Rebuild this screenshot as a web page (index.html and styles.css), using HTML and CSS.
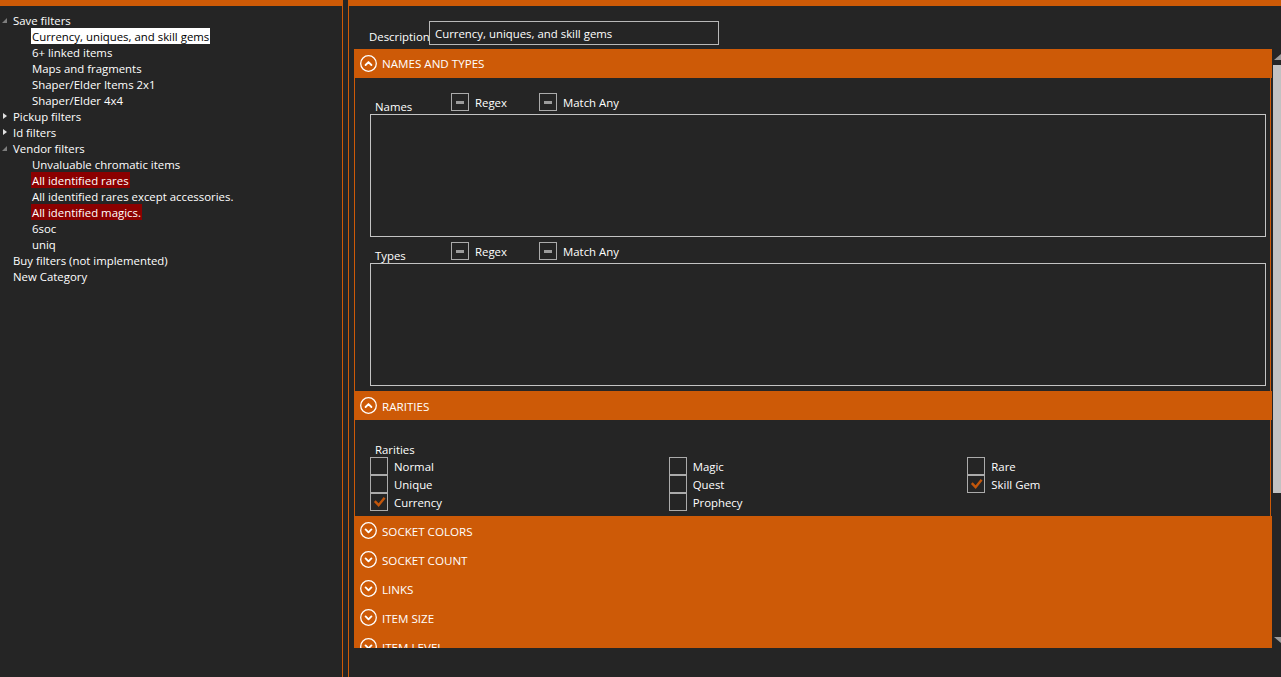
FILE: index.html
```html
<!DOCTYPE html>
<html>
<head>
<meta charset="utf-8">
<link rel="stylesheet" href="styles.css">
</head>
<body>
<div class="app">
  <aside class="tree">
    <div class="node"><span class="exp"><i class="tri-open"></i></span><span class="lbl">Save filters</span></div>
    <div class="node child"><span class="lbl sel">Currency, uniques, and skill gems</span></div>
    <div class="node child"><span class="lbl">6+ linked items</span></div>
    <div class="node child"><span class="lbl">Maps and fragments</span></div>
    <div class="node child"><span class="lbl">Shaper/Elder Items 2x1</span></div>
    <div class="node child"><span class="lbl">Shaper/Elder 4x4</span></div>
    <div class="node"><span class="exp"><i class="tri-closed"></i></span><span class="lbl">Pickup filters</span></div>
    <div class="node"><span class="exp"><i class="tri-closed"></i></span><span class="lbl">Id filters</span></div>
    <div class="node"><span class="exp"><i class="tri-open"></i></span><span class="lbl">Vendor filters</span></div>
    <div class="node child"><span class="lbl">Unvaluable chromatic items</span></div>
    <div class="node child"><span class="lbl warn">All identified rares</span></div>
    <div class="node child"><span class="lbl">All identified rares except accessories.</span></div>
    <div class="node child"><span class="lbl warn">All identified magics.</span></div>
    <div class="node child"><span class="lbl">6soc</span></div>
    <div class="node child"><span class="lbl">uniq</span></div>
    <div class="node"><span class="exp"></span><span class="lbl">Buy filters (not implemented)</span></div>
    <div class="node"><span class="exp"></span><span class="lbl">New Category</span></div>
  </aside>
  <div class="gap"></div>
  <main class="editor">
    <div class="desc-row">
      <span class="desc-label">Description</span>
      <div class="textbox">Currency, uniques, and skill gems</div>
    </div>
    <div class="scroller">
      <div class="sections">
        <section class="sec">
          <div class="sec-head first">
            <svg class="chev" viewBox="0 0 17 17" width="17" height="17"><circle cx="8.5" cy="8.5" r="7.8" fill="none" stroke="#fff" stroke-width="1.3"/><polyline points="5.6,10 8.5,7.1 11.4,10" fill="none" stroke="#fff" stroke-width="1.9" stroke-linecap="round" stroke-linejoin="round"/></svg>
            <span class="sec-title">NAMES AND TYPES</span>
          </div>
          <div class="sec-body names">
            <div class="field-row">
              <span class="field-label">Names</span>
              <span class="cbg first"><span class="cb ind"><i></i></span><span class="cbt">Regex</span></span>
              <span class="cbg"><span class="cb ind"><i></i></span><span class="cbt">Match Any</span></span>
            </div>
            <div class="listbox"></div>
            <div class="field-row second">
              <span class="field-label">Types</span>
              <span class="cbg first"><span class="cb ind"><i></i></span><span class="cbt">Regex</span></span>
              <span class="cbg"><span class="cb ind"><i></i></span><span class="cbt">Match Any</span></span>
            </div>
            <div class="listbox"></div>
          </div>
        </section>
        <section class="sec">
          <div class="sec-head">
            <svg class="chev" viewBox="0 0 17 17" width="17" height="17"><circle cx="8.5" cy="8.5" r="7.8" fill="none" stroke="#fff" stroke-width="1.3"/><polyline points="5.6,10 8.5,7.1 11.4,10" fill="none" stroke="#fff" stroke-width="1.9" stroke-linecap="round" stroke-linejoin="round"/></svg>
            <span class="sec-title">RARITIES</span>
          </div>
          <div class="sec-body rarities">
            <div class="rar-label">Rarities</div>
            <div class="rar-grid">
              <span class="cbg"><span class="cb"></span><span class="cbt">Normal</span></span>
              <span class="cbg"><span class="cb"></span><span class="cbt">Magic</span></span>
              <span class="cbg"><span class="cb"></span><span class="cbt">Rare</span></span>
              <span class="cbg"><span class="cb"></span><span class="cbt">Unique</span></span>
              <span class="cbg"><span class="cb"></span><span class="cbt">Quest</span></span>
              <span class="cbg"><span class="cb"><svg viewBox="0 0 18 18" width="18" height="18"><polyline points="4.8,8.2 8.6,12.2 14.6,4.8" fill="none" stroke="#c2560b" stroke-width="2.4"/></svg></span><span class="cbt">Skill Gem</span></span>
              <span class="cbg"><span class="cb"><svg viewBox="0 0 18 18" width="18" height="18"><polyline points="4.8,8.2 8.6,12.2 14.6,4.8" fill="none" stroke="#c2560b" stroke-width="2.4"/></svg></span><span class="cbt">Currency</span></span>
              <span class="cbg"><span class="cb"></span><span class="cbt">Prophecy</span></span>
            </div>
          </div>
        </section>
        <section class="sec">
          <div class="sec-head">
            <svg class="chev" viewBox="0 0 17 17" width="17" height="17"><circle cx="8.5" cy="8.5" r="7.8" fill="none" stroke="#fff" stroke-width="1.3"/><polyline points="5.6,7.4 8.5,10.3 11.4,7.4" fill="none" stroke="#fff" stroke-width="1.9" stroke-linecap="round" stroke-linejoin="round"/></svg>
            <span class="sec-title">SOCKET COLORS</span>
          </div>
        </section>
        <section class="sec">
          <div class="sec-head">
            <svg class="chev" viewBox="0 0 17 17" width="17" height="17"><circle cx="8.5" cy="8.5" r="7.8" fill="none" stroke="#fff" stroke-width="1.3"/><polyline points="5.6,7.4 8.5,10.3 11.4,7.4" fill="none" stroke="#fff" stroke-width="1.9" stroke-linecap="round" stroke-linejoin="round"/></svg>
            <span class="sec-title">SOCKET COUNT</span>
          </div>
        </section>
        <section class="sec">
          <div class="sec-head">
            <svg class="chev" viewBox="0 0 17 17" width="17" height="17"><circle cx="8.5" cy="8.5" r="7.8" fill="none" stroke="#fff" stroke-width="1.3"/><polyline points="5.6,7.4 8.5,10.3 11.4,7.4" fill="none" stroke="#fff" stroke-width="1.9" stroke-linecap="round" stroke-linejoin="round"/></svg>
            <span class="sec-title">LINKS</span>
          </div>
        </section>
        <section class="sec">
          <div class="sec-head">
            <svg class="chev" viewBox="0 0 17 17" width="17" height="17"><circle cx="8.5" cy="8.5" r="7.8" fill="none" stroke="#fff" stroke-width="1.3"/><polyline points="5.6,7.4 8.5,10.3 11.4,7.4" fill="none" stroke="#fff" stroke-width="1.9" stroke-linecap="round" stroke-linejoin="round"/></svg>
            <span class="sec-title">ITEM SIZE</span>
          </div>
        </section>
        <section class="sec">
          <div class="sec-head">
            <svg class="chev" viewBox="0 0 17 17" width="17" height="17"><circle cx="8.5" cy="8.5" r="7.8" fill="none" stroke="#fff" stroke-width="1.3"/><polyline points="5.6,7.4 8.5,10.3 11.4,7.4" fill="none" stroke="#fff" stroke-width="1.9" stroke-linecap="round" stroke-linejoin="round"/></svg>
            <span class="sec-title">ITEM LEVEL</span>
          </div>
        </section>
      </div>
      <div class="vscroll">
        <div class="vscroll-inner">
          <div class="sb-btn"><i class="sb-up"></i></div>
          <div class="sb-thumb"></div>
          <div class="sb-track"></div>
          <div class="sb-btn"><i class="sb-down"></i></div>
        </div>
      </div>
    </div>
  </main>
</div>
</body>
</html>
```

FILE: styles.css
```css
* { box-sizing: border-box; }
html, body { margin: 0; padding: 0; }
body {
  background: #252525;
  color: #ffffff;
  font-family: "Open Sans", "Noto Sans", "Liberation Sans", sans-serif;
  font-size: 11.4px;
  overflow: hidden;
  width: 1281px;
  height: 677px;
}
.app { display: flex; height: 677px; }

/* tree */
.tree {
  width: 343px;
  flex: none;
  border-top: 6px solid #cd5a07;
  border-right: 1px solid #cd5a07;
  padding-top: 6px;
}
.gap { width: 5px; flex: none; }
.node { display: flex; align-items: flex-start; height: 16px; }
.node.child { padding-left: 31px; }
.exp { width: 12px; height: 16px; flex: none; display: flex; align-items: center; padding-left: 2px; }
.lbl { padding: 1px 1px 0; line-height: 15px; height: 16px; white-space: nowrap; }
.lbl.sel { background: #ffffff; color: #000000; }
.lbl.warn { background: #8b0000; }
.tri-open {
  display: block; width: 0; height: 0;
  border-left: 5px solid transparent;
  border-bottom: 5px solid #7d7d7d;
}
.tri-closed {
  display: block; width: 0; height: 0;
  border-left: 4px solid #e0e0e0;
  border-top: 3.5px solid transparent;
  border-bottom: 3.5px solid transparent;
  margin-left: 1px;
}

/* editor */
.editor {
  flex: 1;
  min-width: 0;
  border-left: 1px solid #cd5a07;
  border-top: 6px solid #cd5a07;
  display: flex;
  flex-direction: column;
}
.desc-row {
  display: flex;
  align-items: flex-end;
  margin-top: 15px;
  padding-left: 20px;
  height: 24px;
}
.desc-label { width: 60px; line-height: 16px; white-space: nowrap; }
.textbox {
  width: 290px;
  height: 24px;
  border: 1px solid #b9b9b9;
  padding: 1px 0 0 5px;
  line-height: 21px;
  background: #252525;
}
.scroller {
  display: flex;
  margin-top: 4px;
  margin-left: 5px;
  height: 599px;
}
.sections { flex: 1; min-width: 0; overflow: hidden; }
.sec-head {
  height: 29px;
  background: #cd5a07;
  display: flex;
  align-items: center;
  padding-left: 6px;
  gap: 5px;
  font-size: 11.6px;
  white-space: nowrap;
}
.sec-title { padding-top: 1px; }
.sec-head.first .sec-title { padding-top: 0; }
.chev { display: block; flex: none; }
.sec-body {
  border-left: 1px solid #cd5a07;
  border-right: 1px solid #cd5a07;
  margin-right: 1px;
  padding: 0 4px 5px 15px;
}
.names { padding-top: 15px; }
.field-row { display: flex; height: 18px; align-items: flex-end; }
.field-row.second { margin-top: 5px; }
.field-label { width: 81px; padding-left: 5px; line-height: 16px; margin-bottom: -4px; flex: none; }
.cbg { display: flex; align-items: center; height: 18px; white-space: nowrap; }
.cbg.first { width: 88px; flex: none; }
.cb {
  width: 18px; height: 18px; flex: none;
  border: 1px solid #ababab;
  display: flex; align-items: center; justify-content: center;
  position: relative;
}
.cb svg { position: absolute; left: -1px; top: -1px; }
.cb.ind i { display: block; width: 8px; height: 3px; background: #9c9c9c; }
.cbt { margin-left: 6px; line-height: 16px; padding-top: 2px; }
.listbox {
  margin-top: 3px;
  height: 123px;
  border: 1px solid #c4c4c4;
}
.rarities { padding-top: 22px; }
.rar-label { padding-left: 5px; line-height: 16px; height: 16px; margin-bottom: -1px; }
.rar-grid {
  display: grid;
  grid-template-columns: repeat(3, 1fr);
  grid-auto-rows: 18px;
}

/* scrollbar */
.vscroll { width: 9px; flex: none; overflow: hidden; }
.vscroll-inner { width: 18px; height: 100%; display: flex; flex-direction: column; }
.sb-btn { height: 16px; flex: none; display: flex; align-items: center; justify-content: center; }
.sb-up { display: block; width: 0; height: 0; border-left: 7px solid transparent; border-right: 7px solid transparent; border-bottom: 6px solid #9a9a9a; }
.sb-down { display: block; width: 0; height: 0; border-left: 7px solid transparent; border-right: 7px solid transparent; border-top: 6px solid #9a9a9a; }
.sb-thumb { height: 428px; flex: none; background: #c2c2c2; margin: 0 1px; }
.sb-track { flex: 1; }
```
